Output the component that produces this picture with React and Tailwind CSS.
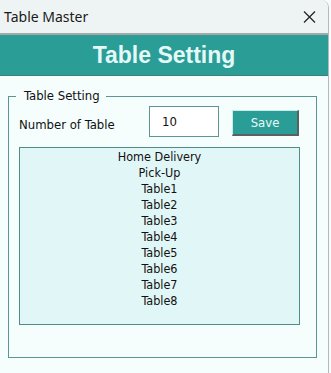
import React from "react";

const items = ["Home Delivery", "Pick-Up", "Table1", "Table2", "Table3", "Table4", "Table5", "Table6", "Table7", "Table8"];

const body = { fontFamily: '"DejaVu Sans Condensed", "DejaVu Sans", sans-serif' };

export default function App() {
	return (
		<div className="w-[331px] h-[373px] bg-[#f7fbfb] overflow-hidden">
			<div className="w-[329px] h-[373px] flex flex-col bg-[#f5fdfd] border-r border-[#b4b8b8] rounded-tr-[8px] overflow-hidden">
				{/* title bar */}
				<div className="h-[35px] shrink-0 bg-[#eef4f3] border-b-2 border-[#a7a9a9] flex items-center justify-between pl-[4px] pr-[12px]">
					<span className="text-[14px] text-[#1a1a1a]" style={{ fontFamily: '"Noto Sans", sans-serif' }}>
						Table Master
					</span>
					<svg width="13" height="12" viewBox="0 0 13 12" className="mt-[1px]">
						<path d="M1 0.5 L12 11.5 M12 0.5 L1 11.5" stroke="#222" strokeWidth="1.2" fill="none" />
					</svg>
				</div>

				{/* header */}
				<div className="h-[41px] shrink-0 bg-[#2a9d96] border-b border-[#3f7d79] flex items-center justify-center">
					<span className="text-[23px] font-bold text-[#e4f9f7] leading-none" style={{ fontFamily: '"Liberation Sans", Arial, sans-serif' }}>
						Table Setting
					</span>
				</div>

				{/* group box */}
				<div className="px-[8px] pt-[13px]" style={body}>
					<fieldset className="w-[309px] h-[269px] border border-[#5a9792] pl-[10px]">
						<legend className="ml-[-3px] pl-[8px] pr-[6px] text-[13px] leading-[14px] text-[#111]">Table Setting</legend>

						<div className="flex items-start mt-[3px]">
							<span className="w-[130px] pt-[9px] text-[13px] text-[#111]">Number of Table</span>
							<div className="w-[70px] h-[31px] bg-white border border-[#5a9792] pl-[12px] pt-[5px] text-[13px] text-[#111]">10</div>
							<button className="ml-[13px] mt-[4px] w-[67px] h-[26px] bg-[#2a9d96] border-t border-l border-[#c9ecea] border-b-2 border-r-2 border-b-[#5a5f5f] border-r-[#5a5f5f] text-[13px] text-[#eafaf8] flex items-center justify-center">
								Save
							</button>
						</div>

						<div className="mt-[10px] w-[281px] h-[178px] bg-[#e1f7f7] border border-[#4d8e89] pt-[1px] flex flex-col items-center">
							{items.map((t) => (
								<div key={t} className="text-[12.5px] leading-[16px] text-[#111]">
									{t}
								</div>
							))}
						</div>
					</fieldset>
				</div>
			</div>
		</div>
	);
}
